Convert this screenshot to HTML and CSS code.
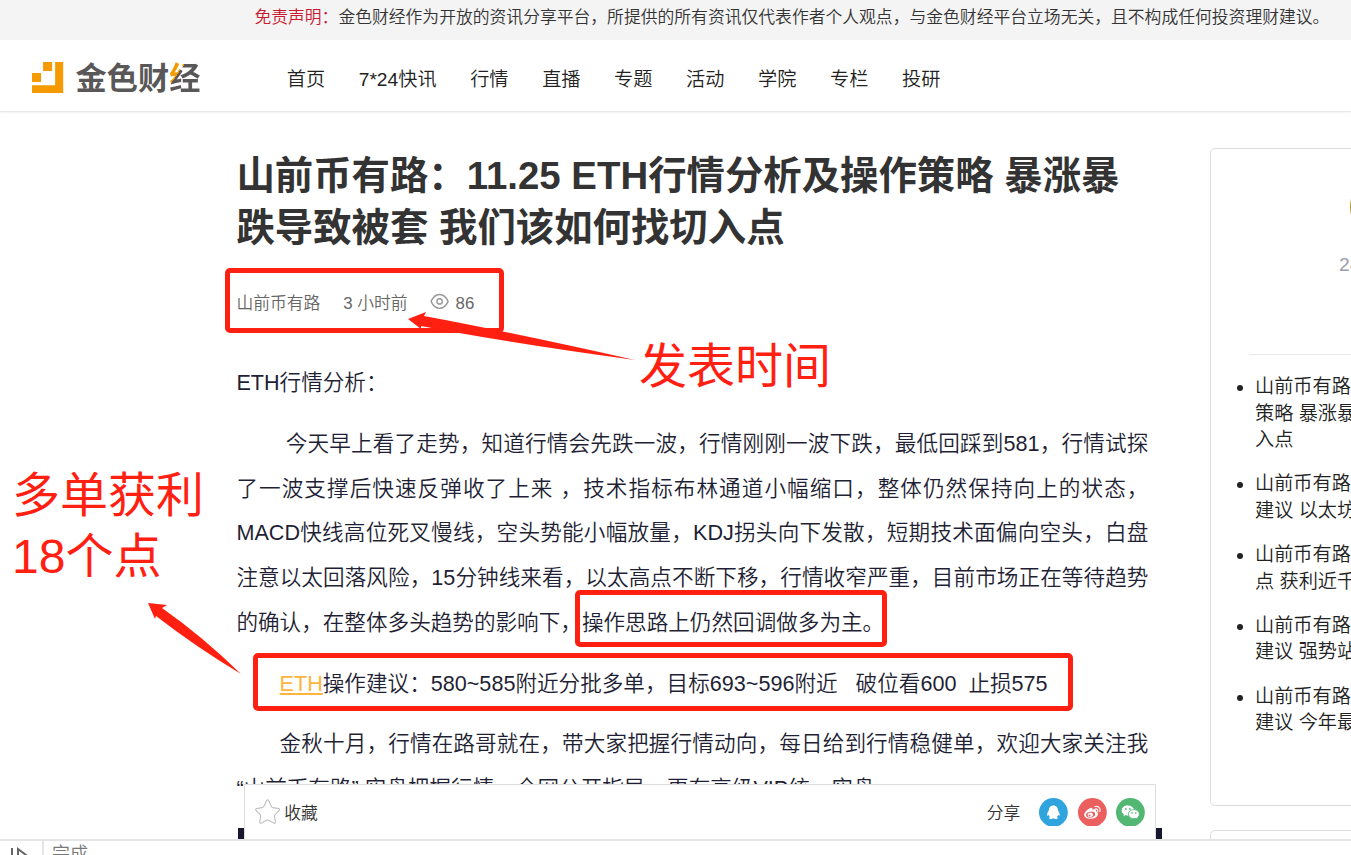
FILE: index.html
```html
<!DOCTYPE html>
<html lang="zh-CN">
<head>
<meta charset="utf-8">
<title>山前币有路：11.25 ETH行情分析及操作策略</title>
<link rel="stylesheet" href="styles.css">
</head>
<body>
<div class="viewport">
  <div class="page">
    <p class="disclaimer"><strong>免责声明：</strong>金色财经作为开放的资讯分享平台，所提供的所有资讯仅代表作者个人观点，与金色财经平台立场无关，且不构成任何投资理财建议。</p>
    <header class="header">
      <a class="logo" href="#">
        <svg class="logo-mark" viewBox="0 0 31 31" aria-hidden="true"><path fill="#f59a00" d="M23 0h8v31H0v-8h23zM11 0h9v9h-9zM0 11h9v9H0z"/></svg>
        <span class="logo-name">金色财<span class="logo-accent">经</span></span>
      </a>
      <nav class="nav">
        <a href="#">首页</a><a href="#">7*24快讯</a><a href="#">行情</a><a href="#">直播</a><a href="#">专题</a><a href="#">活动</a><a href="#">学院</a><a href="#">专栏</a><a href="#">投研</a>
      </nav>
    </header>
    <div class="content">
      <main class="article">
        <h1 class="title">山前币有路：11.25 ETH行情分析及操作策略 暴涨暴跌导致被套 我们该如何找切入点</h1>
        <div class="meta">
          <span>山前币有路</span>
          <span>3 小时前</span>
          <span class="views"><svg class="eye" viewBox="0 0 18 15" aria-hidden="true"><g fill="none" stroke="#999" stroke-width="1.3"><path d="M1 7.500C3 3 6 1 9 1s6 2 8 6.500c-2 4.500-5 6.500-8 6.500S3 12 1 7.500z"/><circle cx="9" cy="7.500" r="2.500"/></g></svg>86</span>
        </div>
        <div class="body">
          <p class="lead">ETH行情分析：</p>
          <p>&nbsp;今天早上看了走势，知道行情会先跌一波，行情刚刚一波下跌，最低回踩到581，行情试探了一波支撑后快速反弹收了上来 ，技术指标布林通道小幅缩口，整体仍然保持向上的状态，MACD快线高位死叉慢线，空头势能小幅放量，KDJ拐头向下发散，短期技术面偏向空头，白盘注意以太回落风险，15分钟线来看，以太高点不断下移，行情收窄严重，目前市场正在等待趋势的确认，在整体多头趋势的影响下，操作思路上仍然回调做多为主。</p>
          <p><a href="#">ETH</a>操作建议：580~585附近分批多单，目标693~596附近&nbsp;&nbsp; 破位看600&nbsp; 止损575</p>
          <p>金秋十月，行情在路哥就在，带大家把握行情动向，每日给到行情稳健单，欢迎大家关注我“山前币有路” 实盘把握行情，全网公开指导，更有高级VIP统一实盘。</p>
          <div class="figure"></div>
        </div>
      </main>
      <aside class="sidebar">
        <section class="card author">
          <div class="profile"><div class="avatar"></div><span class="count">28</span></div>
          <ul class="related">
            <li><a href="#">山前币有路<br>策略 暴涨暴<br>入点</a></li>
            <li><a href="#">山前币有路<br>建议 以太坊</a></li>
            <li><a href="#">山前币有路<br>点 获利近千</a></li>
            <li><a href="#">山前币有路<br>建议 强势站</a></li>
            <li><a href="#">山前币有路<br>建议 今年最</a></li>
          </ul>
        </section>
        <section class="card next"></section>
      </aside>
    </div>
  </div>
  <div class="actions">
    <button class="favorite" type="button"><svg class="star" viewBox="0 0 24 24" aria-hidden="true"><path fill="none" stroke="#bbb" stroke-linejoin="round" d="M11 1.500Q12 0 13 1.500L15.500 7Q16 8 17 8.200L22.500 9Q24 9.500 23 10.800L19 15Q18.500 15.500 18.600 16.500L19.500 22Q19.500 23.500 18 23L13 20.300Q12 19.800 11 20.300L6 23Q4.500 23.500 4.500 22L5.400 16.500Q5.500 15.500 5 15L1 10.800Q0 9.500 1.500 9L7 8.200Q8 8 8.500 7z"/></svg>收藏</button>
    <div class="share">
      <span class="share-label">分享</span>
      <a href="#" aria-label="QQ"><svg class="social" viewBox="0 0 29 29"><circle cx="14.500" cy="14.500" r="14.500" fill="#2fa4df"/><path fill="#fff" d="M14.500 7.500c-3 0-4.600 2.200-4.600 5.200-1.200 1.500-2 3.300-1.700 5 .5.300 1-.2 1.500-.9.200.9.700 1.600 1.300 2.200-1.500.8-1 2.300.8 2.300 1 0 2-.3 2.700-.8.700.5 1.700.8 2.700.8 1.800 0 2.300-1.500.8-2.300.6-.6 1.100-1.300 1.300-2.200.5.700 1 1.200 1.500.9.300-1.700-.5-3.500-1.700-5 0-3-1.600-5.200-4.600-5.200z"/></svg></a>
      <a href="#" aria-label="微博"><svg class="social" viewBox="0 0 29 29"><circle cx="14.500" cy="14.500" r="14.500" fill="#eb5f5f"/><path fill="#fff" d="M11.500 10.500c2-1 3.500-.7 3 1.300 2.500-1 4.500-.5 3.700 1.600 3.800 1.200 2 7.600-5.200 7.600-4.200 0-6.800-1.900-6.800-4.200 0-2 2.300-4.900 5.300-6.300z"/><ellipse cx="12.700" cy="16.800" rx="4.600" ry="3" fill="#eb5f5f" transform="rotate(-8 12.700 16.800)"/><ellipse cx="12.400" cy="17" rx="2.700" ry="2.200" fill="#fff" transform="rotate(-15 12.400 17)"/><circle cx="11.700" cy="17.500" r="1" fill="#eb5f5f"/><path d="M17 8.600c3.500-.8 6 1.500 5 5M17.500 11c1.700-.4 2.900.7 2.400 2.400" fill="none" stroke="#fff" stroke-width="1.200" stroke-linecap="round"/></svg></a>
      <a href="#" aria-label="微信"><svg class="social" viewBox="0 0 29 29"><circle cx="14.500" cy="14.500" r="14.500" fill="#51b773"/><path fill="#fff" d="M12 7.500c-3.600 0-6.200 2.200-6.200 5 0 1.700.9 3 2.300 3.900l-.6 1.900 2.200-1.200c.8.200 1.500.3 2.300.3z"/><ellipse cx="12" cy="12.500" rx="6.200" ry="5" fill="#fff"/><path fill="#fff" stroke="#51b773" stroke-width=".8" d="M18 11.700c3.100 0 5.500 2 5.500 4.600 0 1.400-.8 2.600-1.900 3.400l.4 1.800-2-1c-.7.200-1.300.3-2 .3-3.100 0-5.500-1.900-5.500-4.500s2.400-4.600 5.500-4.600z"/><g fill="#51b773"><circle cx="9.900" cy="11" r=".9"/><circle cx="14" cy="11" r=".9"/><circle cx="16.200" cy="15" r=".8"/><circle cx="19.900" cy="15" r=".8"/></g></svg></a>
    </div>
  </div>
</div>
<footer class="status">
  <span class="status-icon"><svg class="play" viewBox="0 0 20 16" aria-hidden="true"><path d="M2 1v15M8 16V2l12 9" fill="none" stroke="#666" stroke-width="2"/></svg></span>
  <span class="status-text">完成</span>
</footer>
<div class="notes">
  <div class="frame frame-meta"></div>
  <div class="frame frame-idea"></div>
  <div class="frame frame-advice"></div>
  <svg class="arrows" viewBox="0 0 1351 855" aria-hidden="true"><path fill="#ff2012" d="M408 319L426 312L424 316Q510 332 635 360Q510 343 421 326L421 329ZM148 603L167 605L162 608Q202 636 241 674Q196 647 156 616L155 619Z"/></svg>
  <p class="note note-time">发表时间</p>
  <p class="note note-profit">多单获利<br>18个点</p>
</div>
</body>
</html>
```
FILE: styles.css
```css
* { box-sizing: border-box; }
html, body { height: 100%; margin: 0; }
body {
  display: flex;
  flex-direction: column;
  position: relative;
  overflow: hidden;
  background: #fff;
  color: #333;
  font-family: "Liberation Sans", "Noto Sans CJK SC", sans-serif;
  font-weight: 350;
}
p, h1, ul { margin: 0; padding: 0; }
a { color: inherit; text-decoration: none; }
svg { display: block; }

.viewport { flex: 1; min-height: 0; position: relative; overflow: hidden; }
.page, .actions { zoom: 1.2; }

.disclaimer {
  padding-left: 212px;
  background: #f4f4f4;
  font-size: 14px;
  line-height: 30px;
  height: 33px;
  overflow: hidden;
  white-space: nowrap;
}
.disclaimer strong { color: #c9182f; font-weight: inherit; }

.header {
  display: flex;
  align-items: center;
  height: 60px;
  padding: 4px 0 0 27px;
  border-bottom: 1px solid #e8e8e8;
  box-shadow: 0 1px 2px #f2f2f2;
}
.logo { display: flex; align-items: center; gap: 10px; }
.logo-mark { width: 26px; height: 26px; }
.logo-name { padding-top: 3px; font-size: 26px; line-height: 32px; font-weight: 700; color: #595757; }
.logo-accent {
  background: linear-gradient(125deg, #f59a00 32%, #595757 32%);
  background-clip: text;
  color: transparent;
}
.nav { display: flex; gap: 28px; margin-left: 72px; padding-top: 5px; font-size: 16px; line-height: 24px; color: #222; }

.content { display: flex; align-items: flex-start; gap: 51px; padding: 30px 0 0 197px; }
.article { flex: 0 0 760px; min-width: 0; }
.title { padding-top: 2px; font-size: 32px; line-height: 43px; font-weight: 700; color: #333; }
.meta { display: flex; align-items: center; gap: 19px; margin-top: 32px; font-size: 14px; line-height: 20px; color: #666; }
.views { display: flex; align-items: center; gap: 5px; }
.eye { width: 16px; height: 14px; margin-bottom: 3px; }
.body { margin-top: 38px; font-size: 18px; line-height: 2.08; color: #1f1f35; text-align: justify; }
.body p { margin-bottom: 13px; text-indent: 36px; }
.body .lead { text-indent: 0; }
.body a { color: #ffb43c; text-decoration: underline; }
.figure { width: 770px; height: 200px; margin-left: 1px; background: #17172d; }

.sidebar { flex: 0 0 294px; }
.card { border: 1px solid #ddd; border-radius: 4px; }
.author { height: 549px; margin-bottom: 20px; }
.next { height: 200px; }
.profile {
  display: flex;
  flex-direction: column;
  gap: 8px;
  height: 172px;
  margin-left: 32px;
  padding: 19px 0 0 75px;
  border-bottom: 1px solid #e8e8e8;
}
.avatar { width: 60px; height: 60px; margin-left: 9px; border-radius: 50%; background: #b9a12e; }
.count { font-size: 16px; line-height: 20px; color: #9c9cab; }
.related { padding: 16px 0 0 37px; font-size: 16px; line-height: 22px; color: #222; white-space: nowrap; }
.related li { margin-bottom: 15px; }

.actions {
  position: absolute;
  left: 203px;
  bottom: 0;
  width: 760px;
  height: 46px;
  display: flex;
  align-items: center;
  justify-content: space-between;
  padding: 0 8px;
  border: 1px solid #ddd;
  border-bottom: 0;
  background: #fff;
  font-size: 14px;
}
.favorite {
  display: flex;
  align-items: center;
  gap: 3px;
  padding: 0 1px;
  border: 0;
  background: none;
  font: inherit;
  color: #333;
}
.star { width: 21px; height: 21px; }
.share { display: flex; align-items: center; gap: 8px; }
.share-label { margin-right: 8px; }
.social { width: 24px; height: 24px; }

.status {
  display: flex;
  height: 16px;
  border-top: 2px solid #e5e5e5;
  overflow: hidden;
  background: #fff;
  color: #777;
  font-size: 18px;
  line-height: 26px;
}
.status-icon { width: 44px; padding: 6px 0 0 10px; border-right: 2px solid #e5e5e5; }
.play { width: 20px; height: 16px; }
.status-text { padding-left: 8px; }

.notes { position: absolute; inset: 0; pointer-events: none; }
.arrows { position: absolute; left: 0; top: 0; width: 1351px; height: 855px; }
.frame { position: absolute; border: 5px solid #ff2012; border-radius: 5px; }
.frame-meta { left: 225px; top: 268px; width: 279px; height: 65px; }
.frame-idea { left: 575px; top: 590px; width: 312px; height: 57px; }
.frame-advice { left: 253px; top: 653px; width: 820px; height: 58px; }
.note { position: absolute; color: #ff2012; font-size: 48px; line-height: 61px; font-weight: 400; }
.note-time { left: 639px; top: 336px; }
.note-profit { left: 12px; top: 465px; }
```
